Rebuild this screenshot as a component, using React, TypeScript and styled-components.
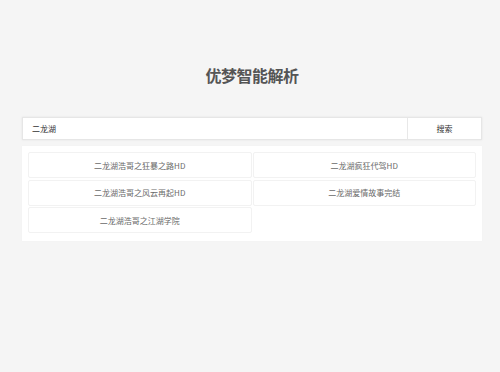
import React from "react";
import styled, { createGlobalStyle } from "styled-components";

const GlobalStyle = createGlobalStyle`
  html, body {
    margin: 0;
    padding: 0;
    background: #f5f5f5;
    font-family: "Noto Sans CJK SC", "Liberation Sans", sans-serif;
  }
`;

const Page = styled.div`
  width: 500px;
  height: 372px;
  padding: 0 18px 0 22px;
  box-sizing: border-box;
  overflow: hidden;
`;

const Title = styled.h1`
  margin: 0;
  padding-top: 64px;
  height: 53px;
  line-height: 22px;
  text-align: center;
  font-size: 16px;
  font-weight: bold;
  color: #555;
  letter-spacing: -0.5px;
`;

const SearchBar = styled.div`
  display: flex;
  height: 21px;
  background: #fff;
  border: 1px solid #e6e6e6;
  box-shadow: 0 0 2px rgba(0, 0, 0, 0.08);
`;

const Input = styled.input`
  flex: 1;
  min-width: 0;
  border: none;
  outline: none;
  padding: 0 0 0 9px;
  font-size: 8px;
  color: #333;
  font-family: inherit;
  background: transparent;
`;

const Button = styled.button`
  width: 74px;
  border: none;
  border-left: 1px solid #e8e8e8;
  background: #fff;
  font-size: 8px;
  color: #333;
  font-family: inherit;
  padding: 0;
`;

const Results = styled.div`
  margin-top: 6px;
  background: #fff;
  padding: 6px 6px 8px;
  display: grid;
  grid-template-columns: 1fr 1fr;
  row-gap: 1.5px;
  column-gap: 1px;
  box-shadow: 0 0 1px rgba(0, 0, 0, 0.04);
`;

const Item = styled.div`
  height: 24px;
  border: 1px solid #f2f2f2;
  border-radius: 2px;
  display: flex;
  align-items: center;
  justify-content: center;
  font-size: 8px;
  color: #6a6a6a;
`;

const items = [
  "二龙湖浩哥之狂暴之路HD",
  "二龙湖疯狂代驾HD",
  "二龙湖浩哥之风云再起HD",
  "二龙湖爱情故事完结",
  "二龙湖浩哥之江湖学院",
];

export default function App() {
  return (
    <Page>
      <GlobalStyle />
      <Title>优梦智能解析</Title>
      <SearchBar>
        <Input defaultValue="二龙湖" />
        <Button>搜索</Button>
      </SearchBar>
      <Results>
        {items.map((t) => (
          <Item key={t}>{t}</Item>
        ))}
      </Results>
    </Page>
  );
}
